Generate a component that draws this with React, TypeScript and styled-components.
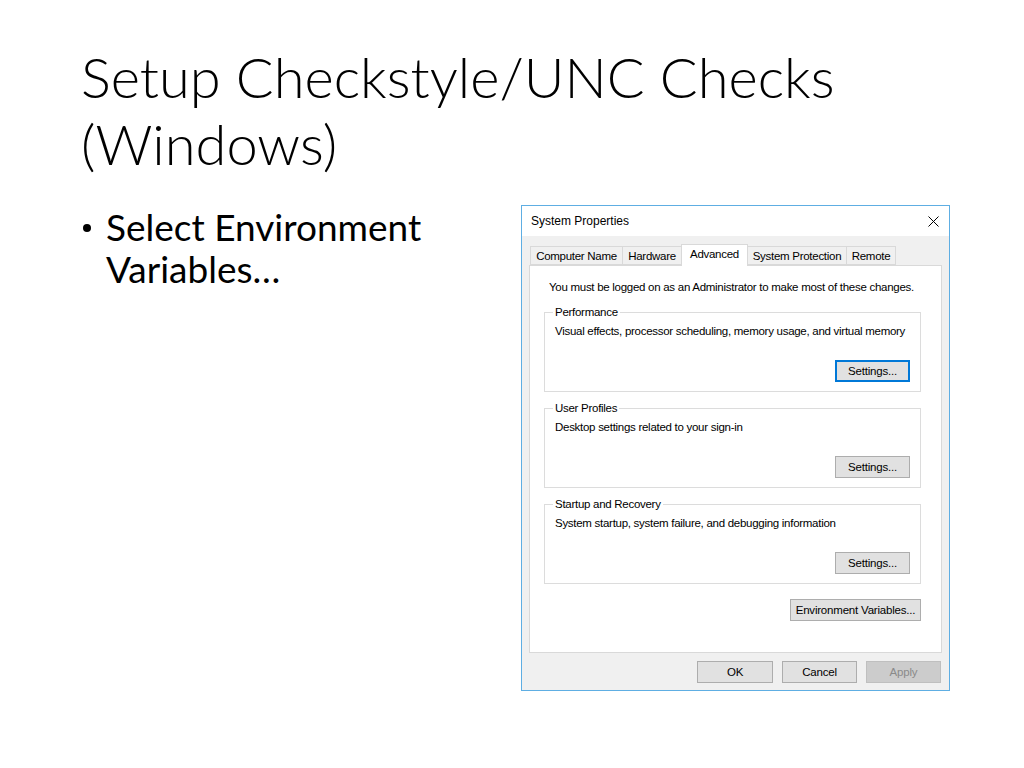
import React from "react";
import styled, { createGlobalStyle } from "styled-components";

const Global = createGlobalStyle`
  html, body { margin: 0; padding: 0; background: #ffffff; }
  * { box-sizing: border-box; }
`;

const Slide = styled.div`
  width: 1024px;
  height: 768px;
  background: #ffffff;
  display: flex;
  flex-direction: column;
  overflow: hidden;
`;

const Title = styled.h1`
  margin: 0;
  padding: 43px 0 0 81px;
  font-family: "Lato", "Open Sans", sans-serif;
  font-weight: 300;
  font-size: 56px;
  line-height: 67px;
  color: #000000;
`;

const Body = styled.div`
  display: flex;
  align-items: flex-start;
  padding-top: 28px;
`;

const Bullets = styled.ul`
  margin: 0;
  padding: 1px 0 0 83px;
  width: 521px;
  list-style: none;
  font-family: "Lato", "Open Sans", sans-serif;
  font-size: 37px;
  line-height: 42px;
  color: #000000;
`;

const Bullet = styled.li`
  display: flex;
  align-items: flex-start;
  gap: 15px;
  &::before {
    content: "";
    flex: none;
    width: 8px;
    height: 8px;
    margin-top: 18px;
    border-radius: 50%;
    background: #000000;
  }
`;

const Dialog = styled.div`
  width: 429px;
  height: 486px;
  border: 1px solid #5eaee3;
  background: #f0f0f0;
  display: flex;
  flex-direction: column;
  font-family: "Liberation Sans", Arial, sans-serif;
  font-size: 11.5px;
  letter-spacing: -0.28px;
  white-space: nowrap;
  color: #000000;
`;

const TitleBar = styled.div`
  height: 30px;
  background: #ffffff;
  display: flex;
  align-items: center;
  justify-content: space-between;
  padding: 0 10px 0 9px;
  font-size: 12px;
  letter-spacing: 0;
`;

const Close = styled.svg`
  width: 11px;
  height: 11px;
`;

const Content = styled.div`
  flex: 1;
  display: flex;
  flex-direction: column;
  padding: 8px 7px 7px 7px;
`;

const Tabs = styled.div`
  display: flex;
  align-items: flex-end;
  padding-left: 1px;
  height: 21px;
`;

const Tab = styled.div<{ $active?: boolean; $w: number }>`
  width: ${(p) => p.$w}px;
  height: ${(p) => (p.$active ? "22px" : "19px")};
  margin-bottom: ${(p) => (p.$active ? "-1px" : "0")};
  padding-bottom: ${(p) => (p.$active ? "3px" : "0")};
  display: flex;
  align-items: center;
  justify-content: center;
  border: 1px solid #d9d9d9;
  border-bottom: ${(p) => (p.$active ? "none" : "1px solid #d9d9d9")};
  margin-left: -1px;
  background: ${(p) => (p.$active ? "#ffffff" : "#f0f0f0")};
  position: relative;
  z-index: ${(p) => (p.$active ? 1 : 0)};
  &:first-child { margin-left: 0; }
`;

const Panel = styled.div`
  height: 388px;
  background: #ffffff;
  border: 1px solid #d9d9d9;
  display: flex;
  flex-direction: column;
  padding: 14px 20px 0 14px;
`;

const Note = styled.div`
  padding-left: 5px;
  line-height: 14px;
`;

const Group = styled.fieldset`
  margin: 11px 0 0 0;
  padding: 0 10px 9px 10px;
  border: 1px solid #dcdcdc;
  min-width: 0;
  & + & { margin-top: 9px; }
`;

const Legend = styled.legend`
  padding: 0 2px;
  margin-left: -2px;
  line-height: 14px;
`;

const GroupBody = styled.div`
  height: 58px;
  margin-top: 5px;
  display: flex;
  flex-direction: column;
  justify-content: space-between;
`;

const GroupText = styled.div`
  line-height: 14px;
`;

const Button = styled.button<{ $default?: boolean; $disabled?: boolean; $w: number }>`
  width: ${(p) => p.$w}px;
  height: 22px;
  padding: 0;
  font-family: inherit;
  font-size: 11.5px;
  letter-spacing: -0.2px;
  color: ${(p) => (p.$disabled ? "#8a8a8a" : "#000000")};
  background: ${(p) => (p.$disabled ? "#cccccc" : "#e1e1e1")};
  border: 1px solid
    ${(p) => (p.$default ? "#0078d7" : p.$disabled ? "#bfbfbf" : "#adadad")};
  box-shadow: ${(p) => (p.$default ? "inset 0 0 0 1px #0078d7" : "none")};
  cursor: default;
`;

const GroupButtonRow = styled.div`
  display: flex;
  justify-content: flex-end;
`;

const EnvRow = styled.div`
  display: flex;
  justify-content: flex-end;
  margin-top: 15px;
`;

const Footer = styled.div`
  margin-top: auto;
  display: flex;
  justify-content: flex-end;
  gap: 9px;
  padding-right: 1px;
`;

const tabs = [
  { label: "Computer Name", w: 93 },
  { label: "Hardware", w: 60 },
  { label: "Advanced", w: 67, active: true },
  { label: "System Protection", w: 100 },
  { label: "Remote", w: 50 },
];

const groups = [
  {
    legend: "Performance",
    text: "Visual effects, processor scheduling, memory usage, and virtual memory",
    def: true,
  },
  { legend: "User Profiles", text: "Desktop settings related to your sign-in", def: false },
  {
    legend: "Startup and Recovery",
    text: "System startup, system failure, and debugging information",
    def: false,
  },
];

export default function App() {
  return (
    <Slide>
      <Global />
      <Title>
        Setup Checkstyle/UNC Checks
        <br />
        (Windows)
      </Title>
      <Body>
        <Bullets>
          <Bullet>
            <span>
              Select Environment
              <br />
              Variables…
            </span>
          </Bullet>
        </Bullets>
        <Dialog>
          <TitleBar>
            <span>System Properties</span>
            <Close viewBox="0 0 11 11">
              <path d="M0.5 0.5 L10.5 10.5 M10.5 0.5 L0.5 10.5" stroke="#000" strokeWidth="1" fill="none" />
            </Close>
          </TitleBar>
          <Content>
            <Tabs>
              {tabs.map((t) => (
                <Tab key={t.label} $w={t.w} $active={t.active}>
                  {t.label}
                </Tab>
              ))}
            </Tabs>
            <Panel>
              <Note>You must be logged on as an Administrator to make most of these changes.</Note>
              {groups.map((g) => (
                <Group key={g.legend}>
                  <Legend>{g.legend}</Legend>
                  <GroupBody>
                    <GroupText>{g.text}</GroupText>
                    <GroupButtonRow>
                      <Button $w={75} $default={g.def}>
                        Settings...
                      </Button>
                    </GroupButtonRow>
                  </GroupBody>
                </Group>
              ))}
              <EnvRow>
                <Button $w={131}>Environment Variables...</Button>
              </EnvRow>
            </Panel>
            <Footer>
              <Button $w={76}>OK</Button>
              <Button $w={75}>Cancel</Button>
              <Button $w={75} $disabled>
                Apply
              </Button>
            </Footer>
          </Content>
        </Dialog>
      </Body>
    </Slide>
  );
}
